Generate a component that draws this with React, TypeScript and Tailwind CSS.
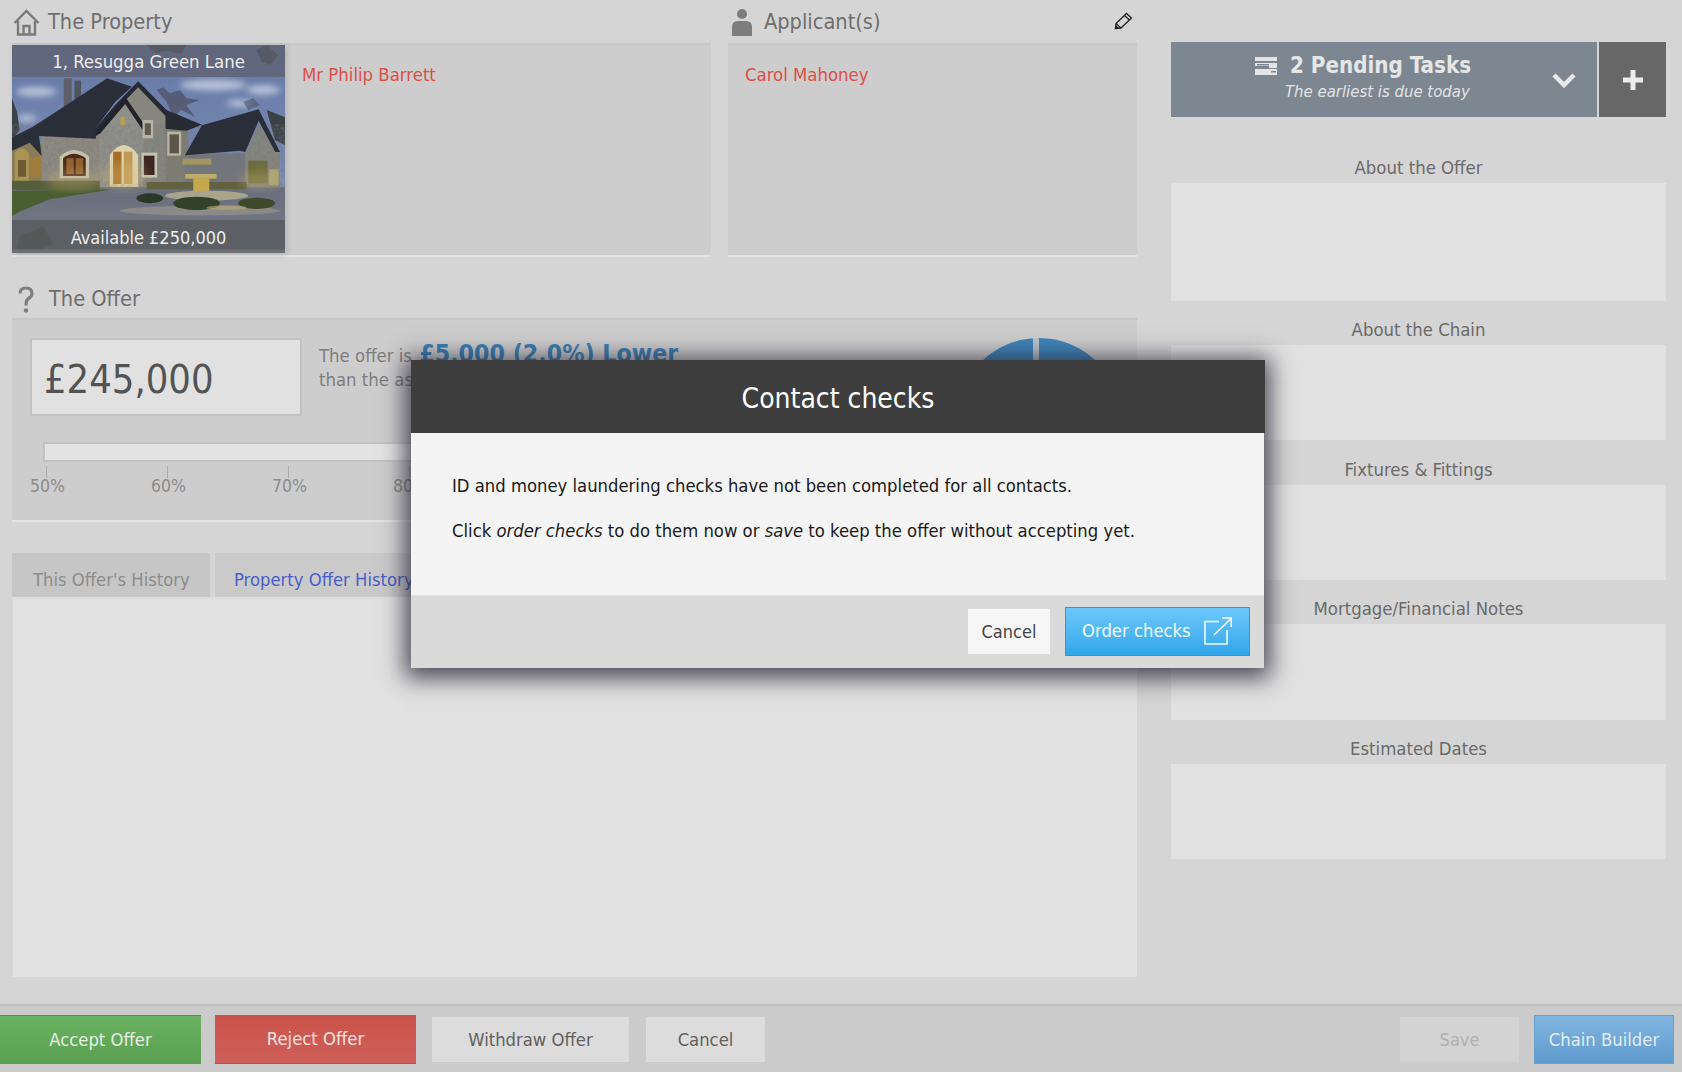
import React from "react";

const font = "font-['DejaVu_Sans_Condensed','DejaVu_Sans',sans-serif]";

function HousePhoto() {
  return (
    <svg viewBox="37 45 818 624" preserveAspectRatio="none" className="block w-full h-full">
      <defs>
        <linearGradient id="sky" x1="0" y1="0" x2="0" y2="1">
          <stop offset="0" stopColor="#6478a6" />
          <stop offset="1" stopColor="#7c8eb4" />
        </linearGradient>
        <linearGradient id="drive" x1="0" y1="0" x2="0" y2="1">
          <stop offset="0" stopColor="#676d7d" />
          <stop offset="1" stopColor="#7b7e8a" />
        </linearGradient>
        <filter id="soft"><feGaussianBlur stdDeviation="1.6" /></filter>
        <filter id="cloud"><feGaussianBlur stdDeviation="9" /></filter>
        <filter id="glow"><feGaussianBlur stdDeviation="14" /></filter>
        <filter id="stone">
          <feTurbulence type="fractalNoise" baseFrequency="0.11" numOctaves="2" seed="4" />
          <feColorMatrix type="matrix" values="0 0 0 0 0.18  0 0 0 0 0.18  0 0 0 0 0.2  1.8 0 0 0 -0.6" />
        </filter>
      </defs>
      <rect x="37" y="45" width="818" height="440" fill="url(#sky)" />
      <g filter="url(#cloud)" fill="#b9c3d8">
        <ellipse cx="110" cy="185" rx="60" ry="14" />
        <ellipse cx="640" cy="165" rx="100" ry="16" />
        <ellipse cx="790" cy="180" rx="50" ry="14" />
        <ellipse cx="80" cy="265" rx="30" ry="10" />
        <ellipse cx="720" cy="220" rx="40" ry="10" />
      </g>
      <g filter="url(#soft)">
        {/* trees behind */}
        <path d="M440 45 L560 45 L545 72 L500 62 L470 70 Z M770 60 L800 45 L835 75 L810 105 L785 95 Z" fill="#33372f" />
        <path d="M37 205 L52 245 L60 300 L37 330 Z M800 240 L855 262 L855 345 L825 330 Z" fill="#3b4245" />
        <path d="M470 180 L490 172 L510 190 L540 180 L560 205 L600 210 L560 225 L585 262 L545 240 L520 260 L500 215 Z" fill="#4d5263" opacity="0.75" />
        <path d="M730 215 L760 205 L780 225 L745 240 Z" fill="#4d5263" opacity="0.6" />
        {/* chimneys */}
        <rect x="192" y="145" width="24" height="90" fill="#5e616a" />
        <rect x="224" y="152" width="20" height="80" fill="#50535c" />
        {/* walls */}
        <rect x="37" y="340" width="90" height="130" fill="#8d7d52" />
        <rect x="125" y="318" width="180" height="155" fill="#8d8b80" />
        <rect x="495" y="295" width="70" height="177" fill="#7e7d72" />
        <rect x="555" y="370" width="185" height="102" fill="#73757b" />
        <path d="M735 472 V372 L776 285 L840 372 V472 Z" fill="#85867d" />
        <path d="M298 475 V310 L376 218 L436 296 V475 Z" fill="#90908a" />
        <path d="M376 205 L415 166 L497 250 V475 H430 V290 Z" fill="#86867f" />
        <rect x="37" y="300" width="818" height="175" filter="url(#stone)" opacity="0.55" />
        {/* roofs */}
        <path d="M37 322 L100 290 L200 225 L322 145 L396 170 L346 216 L290 292 L288 326 L118 318 L126 378 L90 338 L37 362 Z" fill="#2c2e38" />
        <path d="M415 154 L500 240 L606 284 L560 302 L497 296 L497 258 L415 172 L378 210 L300 310 L284 322 L290 292 L346 225 Z" fill="#272932" />
        <path d="M376 200 L445 300 L432 305 L376 222 L300 312 L288 312 Z" fill="#22242c" />
        <path d="M555 376 L606 286 L776 238 L840 366 L826 366 L776 272 L736 366 L720 362 Z" fill="#2b2d37" />
        {/* windows */}
        <path d="M180 445 V380 Q222 340 268 380 V445 Z" fill="#c6c1ab" />
        <path d="M190 438 V385 Q222 358 258 385 V438 Z" fill="#4b2c1c" />
        <path d="M200 385 H222 V432 H200 Z M228 385 H250 V432 H228 Z" fill="#91602f" />
        <rect x="425" y="368" width="47" height="75" fill="#c5c2ae" />
        <rect x="432" y="377" width="32" height="58" fill="#3c2820" />
        <rect x="428" y="270" width="32" height="55" fill="#b7b4a2" />
        <rect x="435" y="280" width="18" height="35" fill="#5f5a50" />
        <rect x="502" y="305" width="42" height="72" fill="#b8b5a3" />
        <rect x="509" y="313" width="28" height="57" fill="#5b5548" />
        <rect x="362" y="260" width="14" height="26" fill="#b6a050" />
        {/* door */}
        <path d="M330 470 V375 Q372 315 415 375 V470 Z" fill="#dcd2ac" />
        <rect x="340" y="365" width="25" height="97" fill="#a76e29" />
        <rect x="372" y="365" width="26" height="97" fill="#c29a58" />
        {/* far left */}
        <path d="M45 465 V370 Q65 340 88 370 V465 Z" fill="#a79457" />
        <rect x="55" y="390" width="24" height="50" fill="#6e5a30" />
        <rect x="92" y="380" width="32" height="60" fill="#a07c3c" />
        {/* right wing windows */}
        <rect x="745" y="392" width="58" height="68" fill="#6b6c3e" />
        <rect x="808" y="418" width="28" height="48" fill="#a7a172" />
        {/* ground */}
        <rect x="37" y="472" width="818" height="197" fill="url(#drive)" />
        <rect x="37" y="472" width="818" height="98" filter="url(#stone)" opacity="0.4" />
        <path d="M37 482 L340 478 L150 508 L60 545 L37 558 Z" fill="#4a5f32" />
        <path d="M37 452 H300 V480 H37 Z" fill="#565e3b" />
        <path d="M440 456 H740 V478 H440 Z" fill="#62623f" />
        {/* fountain */}
        <rect x="548" y="386" width="86" height="18" fill="#a39663" />
        <rect x="556" y="432" width="94" height="14" fill="#bfae68" />
        <rect x="580" y="445" width="48" height="50" fill="#c4a84c" />
        <ellipse cx="620" cy="497" rx="125" ry="15" fill="#a8a58c" />
        <ellipse cx="600" cy="542" rx="240" ry="14" fill="#a7a28f" opacity="0.5" />
        <ellipse cx="450" cy="505" rx="40" ry="15" fill="#2b3725" />
        <ellipse cx="590" cy="520" rx="70" ry="20" fill="#33432c" />
        <ellipse cx="770" cy="520" rx="55" ry="17" fill="#3f4a2c" />
        <ellipse cx="680" cy="533" rx="60" ry="7" fill="#b8ab72" opacity="0.6" />
      </g>
      <g filter="url(#glow)" fill="#d9bd78" opacity="0.3">
        <ellipse cx="370" cy="440" rx="70" ry="40" />
        <ellipse cx="220" cy="450" rx="80" ry="30" />
        <ellipse cx="780" cy="450" rx="60" ry="25" />
      </g>
      <rect x="37" y="570" width="818" height="99" fill="#5c6064" />
      <path d="M60 620 L130 590 L160 640 L100 669 L50 660 Z" fill="#555957" />
      <rect x="37" y="658" width="818" height="11" fill="#6e6f73" />
    </svg>
  );
}

function HouseIcon() {
  return (
    <svg width="27" height="27" viewBox="0 0 27 27" fill="none" stroke="#7a7a7a" strokeWidth="2.4" className="shrink-0">
      <path d="M1.5 14 L13.5 2 L25.5 14" />
      <path d="M5 12 V25.5 H22 V12" />
      <path d="M10.5 25.5 V17 H16.5 V25.5" />
    </svg>
  );
}

function PersonIcon() {
  return (
    <svg width="22" height="27" viewBox="0 0 22 27" fill="#7d7d7d" className="shrink-0">
      <ellipse cx="11" cy="5" rx="5" ry="5" />
      <path d="M1 27 V18 Q1 12 7 12 H15 Q21 12 21 18 V27 Z" />
    </svg>
  );
}

function PencilIcon() {
  return (
    <svg width="19" height="18" viewBox="0 0 19 18" fill="none" stroke="#222" strokeWidth="1.3" className="shrink-0">
      <path d="M12.5 1.5 L17.5 6 L7 16 L1.5 16.5 L2 11.5 Z" />
      <path d="M2 11.5 L7 16" />
      <path d="M10.5 3.5 L15.5 8" />
      <path d="M1.5 16.5 L2 14 L4 16 Z" fill="#222" />
    </svg>
  );
}

function QuestionIcon() {
  return (
    <svg width="16" height="27" viewBox="0 0 16 27" fill="none" stroke="#7e7e7e" strokeWidth="3.2" className="shrink-0">
      <path d="M2 7.5 Q2 2 8 2 Q14 2 14 7.5 Q14 10.5 10.5 12.5 Q8 14 8 19.5" />
      <circle cx="8" cy="24.5" r="2.2" fill="#7e7e7e" stroke="none" />
    </svg>
  );
}

function TasksIcon() {
  return (
    <svg width="22" height="18" viewBox="0 0 22 18" fill="#e4e4e4" className="shrink-0">
      <path d="M0 0 H22 V4 H0 Z M0 6 H22 V11 H14 V9 H0 Z M0 12 H22 V18 H0 Z" />
      <rect x="2" y="7" width="12" height="1.5" fill="#7c8791" />
      <rect x="16" y="14" width="5" height="1.5" fill="#7c8791" />
    </svg>
  );
}

function ExternalIcon() {
  return (
    <svg width="28" height="28" viewBox="0 0 28 28" fill="none" stroke="#f3fafe" strokeWidth="1.6" className="shrink-0">
      <path d="M15 4.5 H1 V27 H23 V13" />
      <path d="M10 18 L27 1.5" />
      <path d="M18 1 H27.2 V10" />
    </svg>
  );
}

function Note({ label, h, mt }: { label: string; h: string; mt: string }) {
  return (
    <div className={mt}>
      <div className="h-[24px] text-center text-[18.4px] leading-[18px] text-[#6a6a6a]">{label}</div>
      <div className={`${h} bg-[#e1e1e1]`} />
    </div>
  );
}

function Tick({ label }: { label: string }) {
  return (
    <div className="w-[121px] shrink-0 flex flex-col">
      <div className="ml-[1px] w-px h-[12px] bg-[#a9a9a9]" />
      <div className="-ml-[15px] -mt-[1px] text-[17.5px] leading-[18px] text-[#8b8b8b]">{label}</div>
    </div>
  );
}

export default function App() {
  return (
    <div className={`${font} relative w-[1682px] h-[1072px] overflow-hidden bg-[#d5d5d5] flex flex-col`}>
      <div className="h-[1004px] flex">
        {/* left */}
        <div className="ml-3 w-[1125px] flex flex-col">
          <div className="flex gap-[17px]">
            <div className="w-[699px]">
              <div className="h-[45px] flex items-center gap-[8px] pl-px pt-[2px] border-b-2 border-[#c6c6c6]">
                <HouseIcon />
                <span className="text-[21.6px] text-[#6e6e6e]">The Property</span>
              </div>
              <div className="h-[212px] bg-[#cdcdcd] border-b-2 border-[#e4e4e4] flex items-start">
                <div className="relative w-[273px] h-[208px] shrink-0 shadow-[2px_2px_6px_rgba(0,0,0,0.12)]">
                  <HousePhoto />
                  <div className="absolute left-0 right-0 top-0 h-[32px] bg-[#5f6373]/80 text-center text-[18.4px] leading-[34px] text-[#eeeeee]">1, Resugga Green Lane</div>
                  <div className="absolute left-0 right-0 bottom-0 h-[32px] text-center text-[18px] leading-[34px] text-[#eeeeee]">Available £250,000</div>
                </div>
                <div className="ml-[17px] mt-[18px] text-[18.4px] leading-[24px] text-[#dc4f47]">Mr Philip Barrett</div>
              </div>
            </div>
            <div className="w-[409px]">
              <div className="h-[45px] flex items-center gap-[11px] pl-[3px] pt-[2px] border-b-2 border-[#c6c6c6]">
                <PersonIcon />
                <span className="text-[21.6px] text-[#6e6e6e]">Applicant(s)</span>
                <span className="ml-auto mr-[4px] -mt-[3px]"><PencilIcon /></span>
              </div>
              <div className="h-[212px] bg-[#cdcdcd] border-b-2 border-[#e4e4e4] pl-[17px] pt-[18px]">
                <div className="text-[18.4px] leading-[24px] text-[#dc4f47]">Carol Mahoney</div>
              </div>
            </div>
          </div>

          <div className="h-[63px] flex items-center gap-[15px] pl-[6px] pt-[23px] border-b-2 border-[#c6c6c6]">
            <QuestionIcon />
            <span className="text-[21.6px] text-[#6e6e6e]">The Offer</span>
          </div>
          <div className="h-[202px] bg-[#cdcdcd] border-b-2 border-[#e4e4e4] pl-[18px] pt-[18px]">
            <div className="flex h-[78px]">
              <div className="w-[272px] h-[78px] shrink-0 bg-[#e1e1e1] border-2 border-[#c2c2c2] pl-[12px] text-[39.5px] leading-[78px] text-[#535353]">£245,000</div>
              <div className="ml-[17px] w-[400px] mt-[6px] text-[18.4px] leading-[24px] text-[#7d7d7d]">
                <div className="h-[24px] whitespace-nowrap">The offer is <span className="ml-[2px] text-[24.7px] leading-[18px] font-bold text-[#3b7fb3]">£5,000 (2.0%) Lower</span></div>
                <div>than the asking price</div>
              </div>
              <svg width="164" height="164" viewBox="0 0 164 164" className="ml-[238px] shrink-0">
                <circle cx="82" cy="82" r="82" fill="#3f84b8" />
                <rect x="76" y="0" width="6" height="30" fill="#b9c4cc" />
              </svg>
            </div>
            <div className="mt-[26px] ml-[13px] h-[20px] w-[1000px] bg-[#e3e3e3] border-2 border-[#c3c3c3]" />
            <div className="mt-[4px] ml-[15px] flex">
              <Tick label="50%" />
              <Tick label="60%" />
              <Tick label="70%" />
              <Tick label="80%" />
            </div>
          </div>
          <div className="mt-[31px] h-[46px] flex gap-[5px] border-b-2 border-[#dedede]">
            <div className="w-[198px] bg-[#c6c6c6] pl-[21px] text-[18.3px] leading-[54px] text-[#8c8c8c]">This Offer's History</div>
            <div className="w-[300px] bg-[#cacaca] pl-[19px] text-[18.3px] leading-[54px] text-[#4a5fc6]">Property Offer History</div>
          </div>
          <div className="h-[378px] ml-px bg-[#e1e1e1]" />
        </div>
        {/* right */}
        <div className="ml-[34px] w-[495px] pt-[42px]">
          <div className="flex h-[75px] gap-[2px]">
            <div className="w-[426px] bg-[#7c8791] relative">
              <div className="flex items-center gap-[13px] pl-[84px] pt-[9px] h-[38px]">
                <TasksIcon />
                <span className="text-[22.2px] font-bold text-[#e6e6e6]">2 Pending Tasks</span>
              </div>
              <div className="pl-[114px] text-[16.6px] italic leading-[24px] text-[#e3e3e3]">The earliest is due today</div>
              <svg width="24" height="16" viewBox="0 0 24 16" fill="none" stroke="#e8e8e8" strokeWidth="4.5" className="absolute right-[21px] top-[30px]">
                <path d="M2 3 L12 13 L22 3" />
              </svg>
            </div>
            <div className="w-[67px] bg-[#676767] flex items-center justify-center">
              <svg width="20" height="20" viewBox="0 0 20 20" fill="#ececec">
                <path d="M7.5 0 H12.5 V7.5 H20 V12.5 H12.5 V20 H7.5 V12.5 H0 V7.5 H7.5 Z" />
              </svg>
            </div>
          </div>
          <Note label="About the Offer" h="h-[118px]" mt="mt-[42px]" />
          <Note label="About the Chain" h="h-[95px]" mt="mt-[20px]" />
          <Note label="Fixtures & Fittings" h="h-[95px]" mt="mt-[21px]" />
          <Note label="Mortgage/Financial Notes" h="h-[96px]" mt="mt-[20px]" />
          <Note label="Estimated Dates" h="h-[95px]" mt="mt-[20px]" />
        </div>
      </div>

      {/* footer */}
      <div className="flex-1 bg-[#cbcbcb] border-t-2 border-[#c0c0c0] flex items-center pt-[1px]">
        <button className="w-[201px] h-[49px] bg-gradient-to-b from-[#6bb263] to-[#5a9f50] border-t border-[#4f9148] text-[18.3px] text-[#e9f1e6]">Accept Offer</button>
        <button className="ml-[14px] w-[201px] h-[49px] bg-gradient-to-b from-[#c9534a] to-[#cf5f5a] border-b border-[#bd4a44] text-[18.3px] text-[#f3e3e0]">Reject Offer</button>
        <button className="ml-[16px] w-[197px] h-[45px] bg-[#dcdcdc] text-[18.3px] text-[#606060]">Withdraw Offer</button>
        <button className="ml-[17px] w-[119px] h-[45px] bg-[#dcdcdc] text-[18.3px] text-[#606060]">Cancel</button>
        <button className="ml-[635px] w-[119px] h-[45px] bg-[#d3d3d3] text-[18px] text-[#b0b0b0]">Save</button>
        <button className="ml-[15px] w-[140px] h-[49px] bg-gradient-to-b from-[#81b5df] to-[#5f9bcf] border border-[#6b9fcb] text-[18.3px] text-[#e3edf5]">Chain Builder</button>
      </div>

      {/* modal */}
      <div className="absolute left-[411px] top-[360px] w-[853px] shadow-[0_4px_22px_6px_rgba(35,32,50,0.8)]">
        <div className="h-[73px] -mr-px bg-[#3e3e3e] text-center text-[28px] leading-[77px] text-white">Contact checks</div>
        <div className="h-[162px] bg-[#f4f4f4] pl-[41px] pt-[40px] text-[18.3px] leading-[26px] text-[#1a1a1a]">
          <p>ID and money laundering checks have not been completed for all contacts.</p>
          <p className="mt-[19px]">Click <em>order checks</em> to do them now or <em>save</em> to keep the offer without accepting yet.</p>
        </div>
        <div className="h-[73px] bg-[#dadada] border-t border-[#e2e2e2] flex items-center justify-end pr-[14px] pb-[2px] gap-[15px]">
          <button className="w-[82px] h-[45px] bg-[#f6f6f6] text-[18px] text-[#444444]">Cancel</button>
          <button className="w-[185px] h-[49px] flex items-center pl-[16px] gap-[13px] bg-gradient-to-b from-[#6cc7fb] to-[#2fa7e9] border border-[#2b9ad8] text-[18.3px] text-[#f3fafe]">
            Order checks
            <ExternalIcon />
          </button>
        </div>
      </div>
    </div>
  );
}
